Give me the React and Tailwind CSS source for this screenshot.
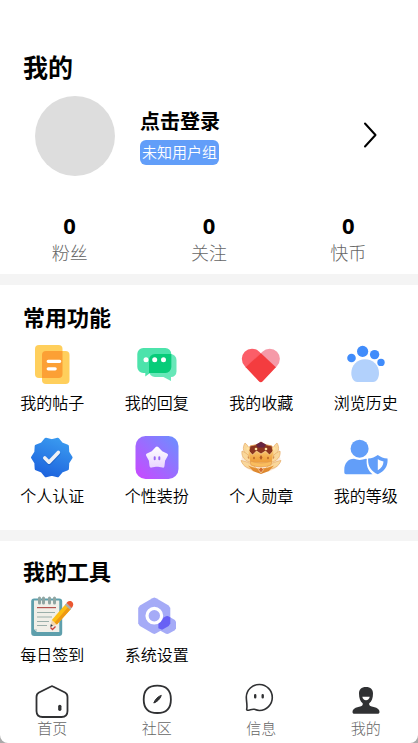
import React from "react";

const stats = [
  { value: 0, label: "粉丝" },
  { value: 0, label: "关注" },
  { value: 0, label: "快币" },
];

function radial(cx, cy, outer, inner, tips, start) {
  return Array.from({ length: tips * 2 }, (_, i) => {
    const r = i % 2 === 0 ? outer : inner;
    const a = ((start + (i * 180) / tips) * Math.PI) / 180;
    return `${(cx + r * Math.cos(a)).toFixed(2)},${(cy + r * Math.sin(a)).toFixed(2)}`;
  }).join(" ");
}

function Icon({ children }) {
  return (
    <svg className="h-11 w-11" viewBox="0 0 44 44" fill="none" aria-hidden="true">
      {children}
    </svg>
  );
}

function PostsIcon() {
  return (
    <Icon>
      <rect x="5" y="3" width="27.5" height="33" rx="4" fill="#FFCF5C" />
      <rect x="12" y="9" width="27.5" height="33" rx="4" fill="#FFCF5C" />
      <path d="M16 9h16.5v23a4 4 0 0 1-4 4H12V13a4 4 0 0 1 4-4Z" fill="#FCA035" />
      <path d="M18.2 19.3h11.5M18.2 26.8h7" stroke="#fff" strokeWidth="3.2" strokeLinecap="round" />
    </Icon>
  );
}

function RepliesIcon() {
  return (
    <Icon>
      <path d="M8.3 6h22a6 6 0 0 1 6 6v13a6 6 0 0 1-6 6H15l-4.7 3.4V31h-2a6 6 0 0 1-6-6V12a6 6 0 0 1 6-6Z" fill="#4CE3AB" />
      <path d="M20 12h15.5a6 6 0 0 1 6 6v11.5a5.5 5.5 0 0 1-5.5 5.5v4L28.500 35H20a6 6 0 0 1-6-6V18a6 6 0 0 1 6-6Z" fill="#4CE3AB" fillOpacity=".85" />
      <path d="M20 12h16.300v13a6 6 0 0 1-6 6H14V18a6 6 0 0 1 6-6Z" fill="#07CC79" />
      <circle cx="11" cy="17.8" r="2.5" fill="#fff" />
      <circle cx="19.7" cy="17.8" r="2.5" fill="#fff" />
      <circle cx="28.5" cy="17.8" r="2.5" fill="#fff" />
    </Icon>
  );
}

function HeartIcon() {
  return (
    <Icon>
      <path d="M6.800 25.500 5.700 24a10.300 10.300 0 0 1 0-14.300 10.300 10.300 0 0 1 14.600 0l1.500 1.500L7 26Z" fill="#FB5E68" />
      <path d="M36.800 25.500 38 24a10.300 10.300 0 0 0 0-14.300 10.300 10.300 0 0 0-14.600 0l-1.600 1.500L36.600 26Z" fill="#F59AA8" />
      <path d="M21.800 11 36.900 25.300 24 39a3 3 0 0 1-4.400 0L6.700 25.300Z" fill="#F43C3F" />
    </Icon>
  );
}

function PawIcon() {
  return (
    <Icon>
      <g fill="#408CFB">
        <circle cx="7.5" cy="16" r="4.3" />
        <circle cx="18.6" cy="9.4" r="5.6" />
        <circle cx="30.6" cy="12.6" r="4.7" />
        <circle cx="37" cy="20.4" r="3.7" />
      </g>
      <path d="M21 17.300c8 0 14 6 14 13.700 0 4.500-2 9-6 9H13.300c-4 0-6-4.500-6-9 0-7.700 6-13.700 13.700-13.700Z" fill="#B2D1FC" />
    </Icon>
  );
}

function VerifiedIcon() {
  return (
    <Icon>
      <defs>
        <linearGradient id="verified" x1="30" y1="3" x2="15" y2="42" gradientUnits="userSpaceOnUse">
          <stop stopColor="#3A9BF0" />
          <stop offset="1" stopColor="#1D62DD" />
        </linearGradient>
      </defs>
      <polygon points={radial(21.8, 22.5, 19.3, 16.8, 10, 0)} fill="url(#verified)" stroke="url(#verified)" strokeWidth="3" strokeLinejoin="round" />
      <path d="m15 24 4.200 4.200L28.500 18.500" stroke="#1553B8" strokeOpacity=".5" strokeWidth="4" strokeLinecap="round" strokeLinejoin="round" />
      <path d="m14.800 23 4.200 4.200 9.300-9.800" stroke="#F0F1F5" strokeWidth="3.6" strokeLinecap="round" strokeLinejoin="round" />
    </Icon>
  );
}

function DressIcon() {
  return (
    <Icon>
      <defs>
        <linearGradient id="dress" x1="3" y1="40" x2="40" y2="4" gradientUnits="userSpaceOnUse">
          <stop stopColor="#C44DFF" />
          <stop offset="1" stopColor="#718BFF" />
        </linearGradient>
        <linearGradient id="dressStar" x1="22" y1="11" x2="22" y2="33" gradientUnits="userSpaceOnUse">
          <stop stopColor="#fff" />
          <stop offset="1" stopColor="#E9D5FF" />
        </linearGradient>
      </defs>
      <rect x=".5" y="1" width="43" height="43" rx="10" fill="url(#dress)" />
      <polygon points={radial(22, 23, 9.8, 6.8, 5, -90)} fill="url(#dressStar)" stroke="url(#dressStar)" strokeWidth="3.4" strokeLinejoin="round" />
      <path d="M19.700 22.300v2M24.300 22.300v2" stroke="#9868F5" strokeWidth="2" strokeLinecap="round" />
    </Icon>
  );
}

function MedalIcon() {
  return (
    <Icon>
      <defs>
        <linearGradient id="gold" x1="22" y1="8" x2="22" y2="38" gradientUnits="userSpaceOnUse">
          <stop stopColor="#FFE2A0" />
          <stop offset=".5" stopColor="#F2A844" />
          <stop offset="1" stopColor="#DC842C" />
        </linearGradient>
      </defs>
      <ellipse cx="22" cy="25" rx="19.5" ry="12.5" fill="#FBE3CB" fillOpacity=".7" />
      <g fill="#F9D79B" stroke="#E3A35B" strokeWidth=".6">
        <path d="M6 8c-3 5-2 10 4 14 2-6 0-11-4-14ZM38 8c3 5 2 10-4 14-2-6 0-11 4-14Z" />
        <path d="M3 16c-1 6 3 10 10 12-1-6-5-10-10-12ZM41 16c1 6-3 10-10 12 1-6 5-10 10-12Z" />
        <path d="M2 25.500c2 6 8 9.500 16 8.500-4-5-10-7.500-16-8.500ZM42 25.500c-2 6-8 9.500-16 8.500 4-5 10-7.500 16-8.500Z" />
      </g>
      <path d="m22 7 4 2.500 7 1.500 2 12-13 8-13-8 2-12 7-1.500Z" fill="#8B351F" stroke="#E7A052" strokeWidth=".8" />
      <path d="M17 9.500 22 6.800l5 2.700-2 3h-6Z" fill="#672442" />
      <path d="m9 15 4.500 5 4-4 4.500 3 4.500-3 4 4 4.500-5-2 13H11Z" fill="url(#gold)" stroke="#FFDFA0" strokeWidth=".7" />
      <path d="M11 26q11 4 22 0l-1 4q-10 4-20 0Z" fill="#F9BD5E" stroke="#E0964A" strokeWidth=".6" />
      <g fill="#FFE2A0">
        <circle cx="9" cy="13.5" r="1.5" />
        <circle cx="17" cy="14" r="1.3" />
        <circle cx="27" cy="14" r="1.3" />
        <circle cx="35" cy="13.5" r="1.5" />
      </g>
      <path d="m22 20 1.500 2.500L22 25l-1.500-2.500ZM15 21.500l1 1.500-1 1.500-1-1.500ZM29 21.500l1 1.500-1 1.500-1-1.500Z" fill="#B25A22" />
      <path d="M9 30.500q13 6 26 0l-5 5.500-8 3-8-3Z" fill="url(#gold)" />
      <path d="m22 32 2.500 2.700L22 38l-2.500-3.300Z" fill="#CF6730" stroke="#FFE0A8" strokeWidth=".7" />
    </Icon>
  );
}

function LevelIcon() {
  return (
    <Icon>
      <g fill="#629EF9">
        <circle cx="15.6" cy="13.7" r="9" />
        <path d="M10 23.800q5.500 2.200 12 0l.8.2c-.8 6.500 1.200 11.500 5.700 15.200H2A1.700 1.700 0 0 1 .3 37.500V35C.3 28.500 4 23.800 10 23.800Z" />
        <path fillRule="evenodd" d="M33.800 20c2.500 2 6 3.300 9.700 3.500.7 7-2.500 13-9.700 15.800-7-2.800-10.300-8.800-9.600-15.800 3.600-.2 7-1.500 9.600-3.500Zm0 4v11.200c3.800-2 5.500-5 5.700-8.700-2.200-.4-4-1.200-5.700-2.500Z" />
      </g>
    </Icon>
  );
}

function CheckInIcon() {
  return (
    <Icon>
      <rect x="1.200" y="4.500" width="31" height="37.500" rx="3" fill="#5E9FAC" />
      <path d="M4 6.500h25.300V38H7l-3-3Z" fill="#F1EFE8" />
      <path d="M4 35h3v3Z" fill="#C9D5D2" />
      <path d="M9.500 4v5M13.500 4v5M19.500 4v5M24.500 4v5" stroke="#8FA5A2" strokeWidth="3" strokeLinecap="round" />
      <path d="M7 13.600h19" stroke="#B5534F" strokeWidth="1.200" />
      <path d="M7 18.500h18M7 23h15M7 27.500h12M7 31.500h10" stroke="#9BAFAA" strokeWidth="1" />
      <path d="m20.300 33 1.600-7 5 4.500Z" fill="#F4D6AF" />
      <path d="m20.300 33 .6-3 2 1.800Z" fill="#27374A" />
      <path d="M21.800 26 35.500 10.300l5.400 4.600-14 15.700Z" fill="#FDBE13" />
      <path d="m24.700 28.500 13.700-15.700 2.500 2.100-14 15.700Z" fill="#EE9913" />
      <path d="m34.800 11 1.700-2 5.400 4.700-1.700 2Z" fill="#AFAFA7" />
      <path d="m36.500 9 .8-1c1.600-1.700 4.200-1.200 5.200.2 1.100 1.500 1 3.200-.1 4.700l-.8 1Z" fill="#EB5730" />
      <path d="m20.500 33.500 2 2 3-3" stroke="#C8413B" strokeWidth="1.300" />
    </Icon>
  );
}

function SettingsIcon() {
  return (
    <Icon>
      <path d="m17.400 4.300 1.900-.8 1.900.8 12.500 7.200 1.600 2.600v15.300l-1.600 2.600-12.500 7.200-1.900.8-1.900-.8L4.900 32l-1.700-2.600V14.100l1.700-2.600Z" fill="#A5ABF7" />
      <path d="m31 22.300 1.200-.4 1.200.4 6.500 3.700 1.100 1.800v6.500l-1.100 1.900-6.500 3.500-1.200.4-1.200-.4-6.500-3.500-1.100-1.900v-6.500l1.100-1.800Z" fill="#A5ABF7" />
      <path d="m31 22.300 1.200-.4 1.200.4 1.900 1.100v6l-1.600 2.600-6.600 3.800-3.700-1.500v-6.500l1.100-1.800Z" fill="#6760F5" />
      <circle cx="19.300" cy="21.700" r="7.300" stroke="#fff" strokeWidth="3.200" />
    </Icon>
  );
}

function NavIcon({ children }) {
  return (
    <svg className="h-[34px] w-[34px] overflow-visible" viewBox="0 0 34 34" fill="none" stroke="#303133" strokeWidth="1.800" aria-hidden="true">
      {children}
    </svg>
  );
}

function HomeNavIcon() {
  return (
    <NavIcon>
      <path d="M16 2.500q1-.6 2 0l12 6q2.500 1.300 2.500 4.500v14q0 6-6 6h-19q-6 0-6-6V13q0-3.200 2.500-4.500Z" />
      <path d="M24.800 22.300v3" strokeWidth="3.300" strokeLinecap="round" />
    </NavIcon>
  );
}

function CommunityNavIcon() {
  return (
    <NavIcon>
      <path d="M17.300 1.700c9.200 0 13.600 4.500 13.600 13.700s-4.400 13.600-13.600 13.600S3.700 24.600 3.700 15.400 8.100 1.700 17.300 1.700Z" />
      <path d="M21.300 11.400c-3 .8-6.300 3.900-7.500 7.600 3-1 6.500-4 7.500-7.600Z" fill="#303133" strokeWidth="1" />
    </NavIcon>
  );
}

function MessageNavIcon() {
  return (
    <NavIcon>
      <path d="M2.300 13a13 13 0 1 1 13.200 13.500c-2 0-3.600-.6-5.200-1.200-2.400-.6-4.500 1-7 .9-.8-.2-.7-.9-.5-1.600.6-3.500-.5-7.500-.5-11.600Z" strokeWidth="1.600" />
      <path d="M11.200 11.300v2M18.700 11.300v2" strokeWidth="2.400" strokeLinecap="round" />
    </NavIcon>
  );
}

function ProfileNavIcon() {
  return (
    <NavIcon>
      <path d="M17 3c4.700 0 7 2.600 7 6.500 0 4.500-1.300 8-3.800 9.800v1.200c0 1.200 1.500 1.700 4.500 2.500 4 1 5.800 2.500 5.800 4.800 0 1.400-.6 2-2 2h-23c-1.400 0-2-.6-2-2 0-2.300 1.800-3.800 5.700-4.800 3-.8 4.500-1.300 4.500-2.500v-1.200C11.300 17.500 10 14 10 9.500 10 5.600 12.300 3 17 3Z" fill="#303133" stroke="none" />
      <path d="M13.300 12.800h7.400q-.7 3.400-3.700 3.400t-3.700-3.400Z" fill="#fff" stroke="none" />
    </NavIcon>
  );
}

const features = [
  { label: "我的帖子", Glyph: PostsIcon },
  { label: "我的回复", Glyph: RepliesIcon },
  { label: "我的收藏", Glyph: HeartIcon },
  { label: "浏览历史", Glyph: PawIcon },
  { label: "个人认证", Glyph: VerifiedIcon },
  { label: "个性装扮", Glyph: DressIcon },
  { label: "个人勋章", Glyph: MedalIcon },
  { label: "我的等级", Glyph: LevelIcon },
];

const tools = [
  { label: "每日签到", Glyph: CheckInIcon },
  { label: "系统设置", Glyph: SettingsIcon },
];

const tabs = [
  { label: "首页", Glyph: HomeNavIcon },
  { label: "社区", Glyph: CommunityNavIcon },
  { label: "信息", Glyph: MessageNavIcon },
  { label: "我的", Glyph: ProfileNavIcon },
];

function ShortcutGrid({ items }) {
  return (
    <div className="grid grid-cols-4 gap-y-5">
      {items.map(({ label, Glyph }) => (
        <button key={label} type="button" className="flex flex-col items-center gap-[5px]">
          <Glyph />
          <span className="text-base leading-6 font-[350]">{label}</span>
        </button>
      ))}
    </div>
  );
}

export default function App() {
  return (
    <div className="min-h-screen bg-[#aaa] font-['Noto_Sans','Noto_Sans_CJK_SC',sans-serif] text-black">
      <div className="flex min-h-screen flex-col rounded-b-lg bg-white">
        <header className="pt-[51px] pb-[7px]">
          <h1 className="px-[23px] text-[25px] leading-8 font-bold">我的</h1>
          <button type="button" className="mt-[13px] flex w-full items-center pr-[41px] pl-[35px] text-left">
            <span className="h-20 w-20 rounded-full bg-[#ddd]" />
            <span className="ml-[25px] flex flex-col items-start gap-1">
              <span className="text-xl leading-7 font-bold">点击登录</span>
              <span className="rounded-md bg-[#629ef9] px-0.5 text-[15px] leading-[25px] font-[350] text-white">未知用户组</span>
            </span>
            <svg className="ml-auto h-7 w-[14px]" viewBox="0 0 14 28" fill="none" stroke="#000" strokeWidth="2" strokeLinecap="round" strokeLinejoin="round" aria-hidden="true">
              <path d="M2 1.500 12.500 13 2 24.500" />
            </svg>
          </button>
          <dl className="grid grid-cols-3 pt-[35px] text-center">
            {stats.map(({ value, label }) => (
              <div key={label} className="flex flex-col-reverse">
                <dt className="text-lg leading-7 font-light text-[#666]">{label}</dt>
                <dd className="text-[22px] leading-7 font-bold">{value}</dd>
              </div>
            ))}
          </dl>
        </header>

        <section className="border-t-[11px] border-[#f4f4f4] pt-4 pb-[22px]">
          <h2 className="mb-[9px] px-[23px] text-[22px] leading-8 font-bold">常用功能</h2>
          <ShortcutGrid items={features} />
        </section>

        <section className="border-t-[11px] border-[#f4f4f4] pt-[14px]">
          <h2 className="mb-[7px] px-[23px] text-[22px] leading-8 font-bold">我的工具</h2>
          <ShortcutGrid items={tools} />
        </section>

        <nav className="mt-auto grid grid-cols-4 pt-4 pb-[5px]">
          {tabs.map(({ label, Glyph }) => (
            <button key={label} type="button" className="flex flex-col items-center">
              <Glyph />
              <span className="text-[15px] leading-5 font-light text-[#666]">{label}</span>
            </button>
          ))}
        </nav>
      </div>
    </div>
  );
}
